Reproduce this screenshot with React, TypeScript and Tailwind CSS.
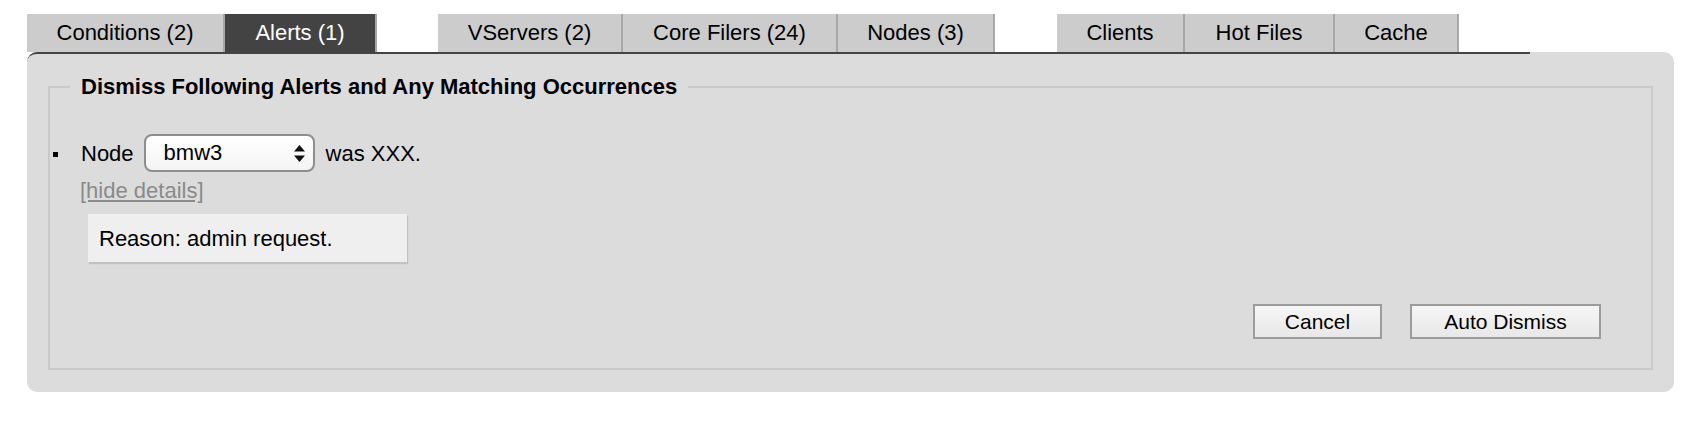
const tabs = [
  { label: "Conditions (2)", className: "w-[198px]" },
  { label: "Alerts (1)", className: "w-[152px]", active: true },
  { label: "VServers (2)", className: "w-[185px] ml-[61px]" },
  { label: "Core Filers (24)", className: "w-[215px]" },
  { label: "Nodes (3)", className: "w-[157px]" },
  { label: "Clients", className: "w-[128px] ml-[62px]" },
  { label: "Hot Files", className: "w-[150px]" },
  { label: "Cache", className: "w-[124px]" },
];

// up/down arrows on the select box
const SelectArrows = () => (
  <svg width="11" height="17" viewBox="0 0 11 17" className="shrink-0">
    <polygon points="5.5,0 11,6.5 0,6.5" fill="#111" />
    <polygon points="0,10.5 11,10.5 5.5,17" fill="#111" />
  </svg>
);

export default function App() {
  return (
    <div
      className="min-h-screen bg-white pt-[14px] pl-[27px] text-black"
      style={{ fontFamily: '"Liberation Sans", Arial, Helvetica, sans-serif' }}
    >
      {/* Tab strip */}
      <div className="flex w-[1503px]">
        {tabs.map((tab) => (
          <div
            key={tab.label}
            className={`${tab.className} flex h-[38px] items-center justify-center border-r-2 border-[#a8a8a8] text-[22px] leading-none ${
              tab.active ? "bg-[#434343] text-white" : "bg-[#cccccc] text-black"
            }`}
          >
            {tab.label}
          </div>
        ))}
      </div>

      {/* Panel */}
      <div className="relative w-[1647px] rounded-[10px] bg-[#dcdcdc] px-[21px] pt-[22px] pb-[22px]">
        <span className="pointer-events-none absolute top-0 left-0 h-[12px] w-[1503px] rounded-tl-[10px] border-t-2 border-[#444444]" />

        <fieldset className="border-2 border-[#c9c9c9]">
          <legend className="ml-[20px] px-[11px] text-[22px] font-bold leading-[25px]">
            Dismiss Following Alerts and Any Matching Occurrences
          </legend>

          <div className="pl-[3px] pt-[35px] pb-[29px]">
            <div className="flex items-center">
              <span className="mt-[2px] h-[5px] w-[5px] bg-black" />
              <span className="ml-[23px] text-[22px] leading-[25px]">Node</span>
              <div className="ml-[10px] flex h-[38px] w-[171px] items-center justify-between rounded-[8px] border-2 border-[#8e8e8e] bg-linear-to-b from-white to-[#f4f4f4] pl-[18px] pr-[8px]">
                <span className="text-[22px] leading-none">bmw3</span>
                <SelectArrows />
              </div>
              <span className="ml-[11px] text-[22px] leading-[25px]">was XXX.</span>
            </div>

            <div className="pl-[27px]">
              <div className="mt-[6px] text-[22px] leading-[25px] text-[#8a8a8a] underline">
                [hide details]
              </div>
              <div className="mt-[11px] ml-[8px] flex h-[48px] w-[319px] items-center bg-[#efefef] pl-[11px] text-[22px] shadow-[1px_2px_1px_rgba(0,0,0,0.12)]">
                Reason: admin request.
              </div>
            </div>

            <div className="mt-[42px] flex justify-end gap-[28px] pr-[50px]">
              <button className="h-[35px] w-[129px] border-2 border-[#9c9c9c] bg-linear-to-b from-[#f6f6f6] to-[#e8e8e8] text-[21px] leading-none">
                Cancel
              </button>
              <button className="h-[35px] w-[191px] border-2 border-[#9c9c9c] bg-linear-to-b from-[#f6f6f6] to-[#e8e8e8] text-[21px] leading-none">
                Auto Dismiss
              </button>
            </div>
          </div>
        </fieldset>
      </div>
    </div>
  );
}
